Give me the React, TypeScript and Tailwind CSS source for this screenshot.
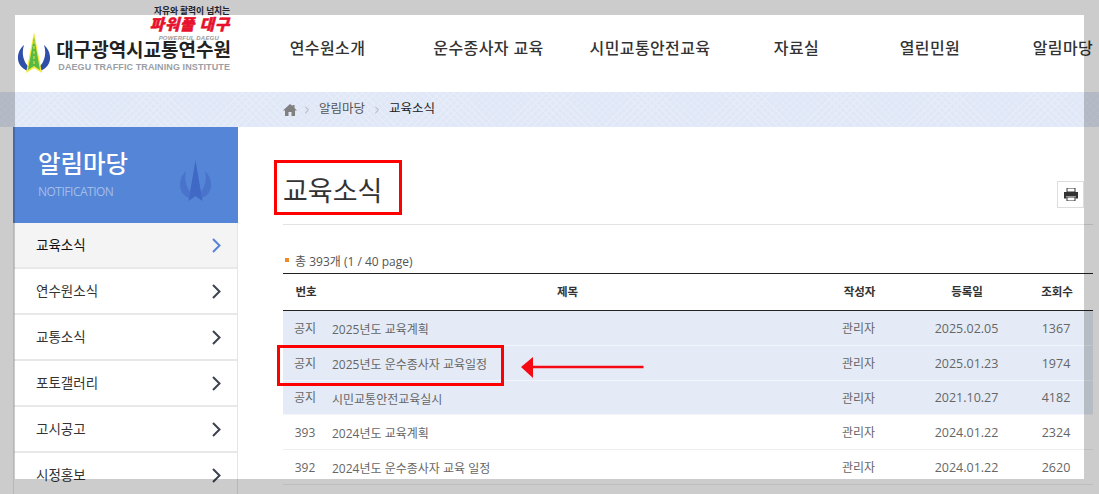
import { ChevronRight } from 'lucide-react';

const navItems = [
  { label: '연수원소개', width: 'w-[161px]' },
  { label: '운수종사자 교육', width: 'w-[161px]' },
  { label: '시민교통안전교육', width: 'w-[162px]' },
  { label: '자료실', width: 'w-[131px]' },
  { label: '열린민원', width: 'w-[136px]' },
  { label: '알림마당', width: 'w-[130px]' },
];

const sideItems = ['교육소식', '연수원소식', '교통소식', '포토갤러리', '고시공고', '시정홍보'];

const rows = [
  { no: '공지', title: '2025년도 교육계획', date: '2025.02.05', hits: '1367', notice: true, h: 'h-[35px]' },
  { no: '공지', title: '2025년도 운수종사자 교육일정', date: '2025.01.23', hits: '1974', notice: true, h: 'h-[35px]' },
  { no: '공지', title: '시민교통안전교육실시', date: '2021.10.27', hits: '4182', notice: true, h: 'h-[34px]' },
  { no: '393', title: '2024년도 교육계획', date: '2024.01.22', hits: '2324', notice: false, h: 'h-[35px]' },
  { no: '392', title: '2024년도 운수종사자 교육 일정', date: '2024.01.22', hits: '2620', notice: false, h: 'h-[35px]' },
];

function LogoMark() {
  return (
    <svg width="34" height="43" viewBox="0 0 34 43" className="shrink-0">
      <path d="M7 13C1 18-1 27 3 33c2 3 5 5 8 6l1-4C7 31 4 22 7 13Z" fill="#2f4fa8" />
      <path d="M27 13c6 5 8 14 4 20-2 3-5 5-8 6l-1-4c5-4 8-13 5-22Z" fill="#2f4fa8" />
      <path d="M17 0l8 41-8-5-8 5Z" fill="#f2e93a" />
      <path d="M17 5l6 33-6-4-6 4Z" fill="#58b947" />
      <path d="M17 9v25" stroke="#f2e93a" strokeWidth="1" strokeDasharray="3 2" />
    </svg>
  );
}

function SideMark() {
  return (
    <svg width="33" height="42" viewBox="0 0 33 42">
      <path d="M7 11C0 17-1 28 4 34c2 2 4 3 6 4l1-6C7 27 5 19 7 11Z" fill="#4a74cc" />
      <path d="M26 11c7 6 8 17 3 23-2 2-4 3-6 4l-1-6c4-5 6-13 4-21Z" fill="#4a74cc" />
      <path d="M16.5 0l7 41-7-5-7 5Z" fill="#4069c6" />
    </svg>
  );
}

export default function App() {
  return (
    <div className="relative h-[494px] w-[1099px] overflow-hidden bg-white font-['Open_Sans','Noto_Sans_CJK_KR',sans-serif] text-[#333]">
      <header className="flex h-[92px]">
        <div className="flex w-[247px] shrink-0 items-start pl-[17px]">
          <div className="mt-[32px]">
            <LogoMark />
          </div>
          <div className="ml-[6px] flex w-[174px] flex-col items-end pt-[6px]">
            <span className="mr-[1px] text-[8.75px] font-bold leading-[10px] tracking-[-0.1px] text-[#2b2b3a]">자유와 활력이 넘치는</span>
            <span className="mr-[1px] mt-[1px] text-[15.5px] font-black italic leading-[15px] tracking-[0.8px] text-[#e8112d] [-webkit-text-stroke:0.5px_#e8112d]">파워풀 대구</span>
            <span className="mr-[12px] mt-[3px] font-['Liberation_Sans',sans-serif] text-[6px] font-bold italic leading-[6px] tracking-[0.2px] text-[#999]">POWERFUL DAEGU</span>
            <span className="-mt-[3px] whitespace-nowrap text-[19px] font-bold leading-[24px] text-[#222]">대구광역시교통연수원</span>
            <span className="mr-[1px] whitespace-nowrap font-['Liberation_Sans',sans-serif] text-[9px] font-bold leading-[11px] tracking-[0.1px] text-[#9a9ea6]">DAEGU TRAFFIC TRAINING INSTITUTE</span>
          </div>
        </div>
        <nav className="flex items-center pt-[4px]">
          {navItems.map((item) => (
            <a key={item.label} className={`${item.width} shrink-0 whitespace-nowrap text-center text-[16px] font-medium tracking-[0.4px] text-[#333]`}>
              {item.label}
            </a>
          ))}
        </nav>
      </header>

      <div className="flex h-[35px] items-center bg-[#e0e7f7] bg-[repeating-linear-gradient(45deg,#e7ecf9_0,#e7ecf9_1px,transparent_1px,transparent_5px),repeating-linear-gradient(-45deg,#e7ecf9_0,#e7ecf9_1px,transparent_1px,transparent_5px)] pl-[283px] text-[12.5px]">
        <svg width="14" height="12" viewBox="0 0 14 12">
          <path d="M7 0L0 6.5h2V12h3.5V8h3v4H12V6.5h2L11.5 4V1h-2v1Z" fill="#808080" />
        </svg>
        <ChevronRight size={12} className="mx-[4px] text-[#aaa]" />
        <span className="ml-[2px] text-[#555]">알림마당</span>
        <ChevronRight size={12} className="mx-[6px] text-[#aaa]" />
        <span className="text-[#222]">교육소식</span>
      </div>

      <div className="flex items-start">
        <aside className="ml-[13px] w-[225px] shrink-0">
          <div className="flex h-[96px] justify-between bg-[#5585d6] pl-[25px] pr-[26px] pt-[19px]">
            <div>
              <h2 className="text-[24.5px] font-medium leading-[36px] text-white">알림마당</h2>
              <p className="mt-[2px] text-[12px] leading-[16px] tracking-[-0.5px] text-[#a3bdea]">NOTIFICATION</p>
            </div>
            <div className="mt-[14px]">
              <SideMark />
            </div>
          </div>
          <ul className="border-x border-[#e5e5e5]">
            {sideItems.map((item, i) => (
              <li
                key={item}
                className={`flex h-[46px] items-center justify-between border-b-2 border-[#e8e8e8] pl-[22px] pr-[16px] text-[13.5px] ${i === 0 ? 'bg-[#f4f4f4] text-[#111]' : 'text-[#333]'}`}
              >
                {item}
                <svg width="9" height="15" viewBox="0 0 9 15" fill="none" stroke={i === 0 ? '#5585d6' : '#3c4250'} strokeWidth="2">
                  <path d="M1 1l6.5 6.5L1 14" />
                </svg>
              </li>
            ))}
          </ul>
        </aside>

        <main className="ml-[45px] w-[810px] shrink-0">
          <div className="flex h-[98px] items-start justify-between border-b border-[#e3e3e3]">
            <h1 className="mt-[42px] text-[27px] leading-[44px] text-[#333]">교육소식</h1>
            <button className="mr-[9px] mt-[54px] flex h-[27px] w-[27px] items-center justify-center border border-[#ddd] bg-white">
              <svg width="14" height="13" viewBox="0 0 14 13">
                <path d="M3 0h8v4H3Z M3 9h8v4H3Z" fill="none" stroke="#333" strokeWidth="1" />
                <path d="M0 4h14v6.5h-2.5V8h-9v2.5H0Z" fill="#333" />
              </svg>
            </button>
          </div>
          <div className="flex h-[48px] items-center pl-[2px] pt-[26px] text-[12px] text-[#555]">
            <span className="mb-[4px] h-[4px] w-[4px] bg-[#f08a24]" />
            <span className="ml-[6px] leading-[18px]">총 393개 (1 / 40 page)</span>
          </div>
          <div className="flex h-[38px] items-center border-y border-[#222] text-center text-[11.5px] font-bold text-[#333]">
            <span className="w-[46px]">번호</span>
            <span className="flex-1">제목</span>
            <span className="w-[107px]">작성자</span>
            <span className="w-[108px]">등록일</span>
            <span className="w-[72px]">조회수</span>
          </div>
          {rows.map((row) => (
            <div
              key={row.title}
              className={`flex ${row.h} items-center border-b pt-[2px] text-center text-[12px] text-[#666] ${row.notice ? 'border-[#f2f5fb] bg-[#e4ebf6]' : 'border-[#eee]'}`}
            >
              <span className="mb-[1px] w-[44px]">{row.no}</span>
              <span className="ml-[5px] mt-[2px] flex-1 text-left">{row.title}</span>
              <span className="w-[111px]">관리자</span>
              <span className="w-[105px] text-[12.5px]">{row.date}</span>
              <span className="w-[74px] text-[12.5px]">{row.hits}</span>
            </div>
          ))}
        </main>
      </div>

      {/* screenshot annotations */}
      <div className="absolute left-[274px] top-[160px] h-[55px] w-[128px] border-[3px] border-[#ff0000]" />
      <div className="absolute left-[277px] top-[345px] h-[41px] w-[227px] border-[3px] border-[#ff0000]" />
      <svg className="absolute left-[520px] top-[356px]" width="125" height="23" viewBox="0 0 125 23">
        <path d="M1 11L13 1v8.7h110.5v2.6H13V22Z" fill="#f50a14" />
      </svg>

      {/* grey frame over the page */}
      <div className="pointer-events-none absolute inset-0 border-[15px] border-black/20" />
    </div>
  );
}
